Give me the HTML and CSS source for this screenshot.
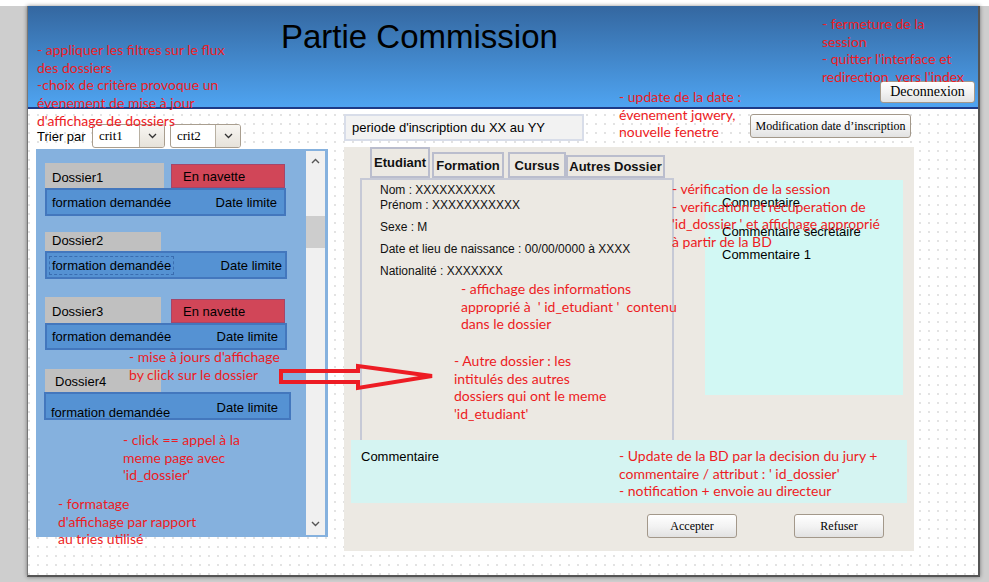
FILE: index.html
```html
<!DOCTYPE html>
<html lang="fr">
<head>
<meta charset="utf-8">
<title>Partie Commission</title>
<link rel="stylesheet" href="styles.css">
</head>
<body>
<div class="screen">
  <div class="canvas">
    <header class="header">
      <h1 class="title">Partie Commission</h1>
      <button class="btn btn-logout">Deconnexion</button>
    </header>

    <div class="main">
      <section class="left-col">
        <div class="toolbar">
          <span class="sort-label">Trier par</span>
          <div class="select sel1"><span class="sel-text">crit1</span><span class="sel-arrow"><svg width="9" height="6" viewBox="0 0 9 6"><path d="M1 1 L4.5 4.5 L8 1" fill="none" stroke="#333" stroke-width="1.3"/></svg></span></div>
          <div class="select sel2"><span class="sel-text">crit2</span><span class="sel-arrow"><svg width="9" height="6" viewBox="0 0 9 6"><path d="M1 1 L4.5 4.5 L8 1" fill="none" stroke="#333" stroke-width="1.3"/></svg></span></div>
        </div>

        <div class="list">
          <div class="list-items">
            <div class="dossier d1">
              <div class="d-top">
                <div class="d-name">Dossier1</div>
                <div class="d-badge">En navette</div>
              </div>
              <div class="d-bar"><span>formation demandée</span><span>Date limite</span></div>
            </div>

            <div class="dossier d2">
              <div class="d-top">
                <div class="d-name">Dossier2</div>
              </div>
              <div class="d-bar"><span class="focus">formation demandée</span><span>Date limite</span></div>
            </div>

            <div class="dossier d3">
              <div class="d-top">
                <div class="d-name">Dossier3</div>
                <div class="d-badge">En navette</div>
              </div>
              <div class="d-bar"><span>formation demandée</span><span>Date limite</span></div>
            </div>

            <div class="dossier d4">
              <div class="d-top">
                <div class="d-name">Dossier4</div>
              </div>
              <div class="d-bar"><span class="low">formation demandée</span><span class="high">Date limite</span></div>
            </div>
          </div>
          <div class="scrollbar">
            <span class="sb-up"><svg width="9" height="6" viewBox="0 0 9 6"><path d="M1 5 L4.5 1.5 L8 5" fill="none" stroke="#555" stroke-width="1.4"/></svg></span>
            <span class="sb-thumb"></span>
            <span class="sb-down"><svg width="9" height="6" viewBox="0 0 9 6"><path d="M1 1 L4.5 4.5 L8 1" fill="none" stroke="#555" stroke-width="1.4"/></svg></span>
          </div>
        </div>
      </section>

      <section class="right-col">
        <div class="top-row">
          <div class="periode">periode d'inscription du XX au YY</div>
          <button class="btn btn-modif">Modification date d’inscription</button>
        </div>

        <div class="panel">
          <div class="tabs">
            <div class="tab tab-etudiant">Etudiant</div>
            <div class="tab tab-formation">Formation</div>
            <div class="tab tab-cursus">Cursus</div>
            <div class="tab tab-autres">Autres Dossier</div>
          </div>
          <div class="content-row">
            <div class="info-box">
              <div class="info-pair">
                <div>Nom : XXXXXXXXXX</div>
                <div>Prénom : XXXXXXXXXXX</div>
              </div>
              <div class="info-line">Sexe : M</div>
              <div class="info-line">Date et lieu de naissance : 00/00/0000 à XXXX</div>
              <div class="info-line">Nationalité : XXXXXXX</div>
            </div>
            <div class="comments">
              <div class="c1">Commentaire</div>
              <div class="c2">Commentaire secrétaire</div>
              <div class="c3">Commentaire 1</div>
            </div>
          </div>
          <div class="comment-bottom">Commentaire</div>
          <div class="actions">
            <button class="btn btn-act">Accepter</button>
            <button class="btn btn-act btn-refuse">Refuser</button>
          </div>
        </div>
      </section>
    </div>

    <!-- annotations layered over the mockup -->
    <div class="note n-a">- appliquer les filtres sur le flux<br>des dossiers<br>-choix de critère provoque un<br>évenement de mise à jour<br>d'affichage de dossiers</div>
    <div class="note n-b">- fermeture de la<br>session<br>- quitter l'interface et<br>redirection&nbsp; vers l'index</div>
    <div class="note n-c">- update de la date :<br>évenement jqwery,<br>nouvelle fenetre</div>
    <div class="note n-d">- vérification de la session<br>- verification et récuperation de<br>'id_dossier ' et affichage approprié<br>à partir de la BD</div>
    <div class="note n-e">- affichage des informations<br>approprié à&nbsp; ' id_etudiant '&nbsp; contenu<br>dans le dossier</div>
    <div class="note n-f">- Autre dossier : les<br>intitulés des autres<br>dossiers qui ont le meme<br>'id_etudiant'</div>
    <div class="note n-g">- Update de la BD par la decision du jury +<br>commentaire / attribut : ' id_dossier'<br>- notification + envoie au directeur</div>
    <div class="note n-h">- mise à jours d'affichage<br>by click sur le dossier</div>
    <div class="note n-i">- click == appel à la<br>meme page avec<br>'id_dossier'</div>
    <div class="note n-j">- formatage<br>d'affichage par rapport<br>au tries utilisé</div>

    <svg class="arrow" width="160" height="32" viewBox="0 0 160 32">
      <polygon points="2,9 79,9 79,4 153,14 79,26 79,20 2,20" fill="none" stroke="#ed1c24" stroke-width="4" stroke-linejoin="miter"/>
    </svg>
  </div>
</div>
</body>
</html>
```

FILE: styles.css
```css
* { box-sizing: border-box; }
html, body { margin: 0; padding: 0; }
body {
  background: #fff;
  width: 989px;
  height: 582px;
  overflow: hidden;
  font-family: "Liberation Sans", Arial, sans-serif;
  color: #000;
}
.screen {
  margin-top: 6px;
  height: 576px;
  background: #cecece;
  padding-left: 27px;
}
.canvas {
  position: relative;
  width: 953px;
  height: 571px;
  border-left: 1px solid #777;
  border-right: 2px solid #555;
  border-bottom: 2px solid #555;
  background-color: #fff;
  background-image: radial-gradient(circle at 1px 1px, #e2e2e2 0.7px, transparent 1.2px);
  background-size: 9px 9px;
  box-shadow: 0 0 4px rgba(0, 0, 0, 0.45);
}

/* header */
.header {
  height: 103px;
  border-bottom: 2px solid #1d3a87;
  background: linear-gradient(#3467a0, #4fa4f1);
  display: flex;
  justify-content: space-between;
  padding: 12px 3px 4px 253px;
}
.title {
  margin: 0;
  font-weight: normal;
  font-size: 33px;
  line-height: 38px;
  color: #000;
  align-self: flex-start;
}

/* buttons */
.btn {
  font-family: "Liberation Serif", "Times New Roman", serif;
  font-size: 12px;
  color: #000;
  background: linear-gradient(#ffffff, #f3f3f3 50%, #e2e2e2);
  border: 1px solid #a3988a;
  border-radius: 3px;
  padding: 0;
  margin: 0;
  display: flex;
  align-items: center;
  justify-content: center;
}
.btn-logout {
  align-self: flex-end;
  width: 95px;
  height: 22px;
  font-size: 14px;
}
.btn-modif {
  width: 161px;
  height: 24px;
  margin-right: 3px;
}

/* main layout */
.main {
  display: flex;
  align-items: flex-start;
}
.left-col {
  margin-left: 8px;
  width: 292px;
}
.right-col {
  margin-left: 16px;
  width: 570px;
}

/* toolbar */
.toolbar {
  margin-top: 15px;
  height: 24px;
  display: flex;
  align-items: center;
  margin-bottom: 1px;
}
.sort-label {
  width: 56px;
  padding-left: 1px;
  font-size: 13px;
}
.select {
  height: 24px;
  display: flex;
  border: 1px solid #a99e8f;
  border-radius: 3px;
  background: #fff;
  font-family: "Liberation Serif", "Times New Roman", serif;
  font-size: 13px;
  overflow: hidden;
}
.sel1 { width: 73px; }
.sel2 { width: 71px; margin-left: 5px; }
.sel-text {
  flex: 1;
  padding-left: 6px;
  display: flex;
  align-items: center;
}
.sel-arrow {
  width: 25px;
  border-left: 1px solid #b8b0a2;
  background: linear-gradient(#f8f6f2, #e6e2da);
  display: flex;
  align-items: center;
  justify-content: center;
}

/* list */
.list {
  height: 388px;
  background: #85b1de;
  display: grid;
  grid-template-columns: 1fr 19px;
  padding-right: 3px;
}
.list-items {
  padding: 14px 0 0 9px;
  font-size: 13px;
}
.dossier { display: flex; flex-direction: column; }
.d-top { display: flex; align-items: flex-end; }
.d-name {
  background: #c0c0c0;
  width: 116px;
  padding-left: 7px;
}
.d-badge {
  margin-left: 10px;
  width: 114px;
  height: 24px;
  background: #d14658;
  border: 1px solid #a4466a;
  padding-left: 11px;
  line-height: 24px;
}
.d-bar {
  height: 28px;
  width: 242px;
  background: #5592d3;
  border: 2px solid #4377bd;
  display: flex;
  justify-content: space-between;
  align-items: center;
  padding: 0 6px 0 5px;
}
.d1 .d-name { width: 119px; height: 25px; padding-top: 7px; }
.d1 .d-badge { margin-left: 7px; }
.d1 .d-bar { width: 241px; padding-right: 7px; }
.d2 { margin-top: 16px; }
.d2 .d-name { height: 19px; padding-top: 1px; }
.d2 .d-bar { padding-right: 3px; }
.focus {
  outline: 1px dashed #3a6db0;
  outline-offset: 1px;
  padding: 0 1px;
  margin-left: -1px;
}
.d3 { margin-top: 18px; }
.d3 .d-name { height: 26px; padding-top: 7px; }
.d3 .d-badge { margin-left: 10px; }
.d3 .d-bar { height: 27px; padding-right: 7px; }
.d4 { margin-top: 19px; }
.d4 .d-name { height: 23px; padding-top: 5px; padding-left: 10px; }
.d4 .d-bar {
  width: 247px;
  margin-left: -1px;
  align-items: flex-start;
  padding: 0 11px 0 5px;
}
.d4 .low { margin-top: 11px; }
.d4 .high { margin-top: 6px; }

.scrollbar {
  margin: 2px 0;
  background: #f0f0f0;
  position: relative;
  display: flex;
  flex-direction: column;
  align-items: center;
}
.sb-up { margin-top: 7px; height: 8px; display: flex; }
.sb-thumb {
  margin-top: 50px;
  width: 19px;
  height: 32px;
  background: #cdcdcd;
}
.sb-down { margin-top: auto; margin-bottom: 6px; height: 8px; display: flex; }

/* right column */
.top-row {
  margin-top: 5px;
  display: flex;
  justify-content: space-between;
  align-items: flex-start;
}
.periode {
  width: 240px;
  height: 27px;
  background: #f2f2f2;
  border: 2px solid #d8dde9;
  padding-left: 6px;
  font-size: 13px;
  line-height: 23px;
}
.panel {
  margin-top: 6px;
  height: 404px;
  background: #ece9e3;
  font-size: 13px;
}
.tabs {
  display: flex;
  align-items: flex-end;
  padding-left: 26px;
  height: 31px;
}
.tab {
  border: 2px solid #babdcd;
  font-weight: bold;
  display: flex;
  align-items: center;
  justify-content: center;
  color: #111;
}
.tab-etudiant { width: 60px; height: 31px; }
.tab-formation { width: 72px; height: 26px; margin-left: 2px; }
.tab-cursus { width: 58px; height: 26px; margin-left: 4px; }
.tab-autres { width: 99px; height: 23px; }

.content-row {
  display: flex;
  align-items: flex-start;
}
.info-box {
  margin-left: 16px;
  width: 314px;
  height: 264px;
  border: 2px solid #c6c9d6;
  padding: 3px 0 0 18px;
  font-size: 12px;
  line-height: 15px;
  color: #111;
}
.info-line { margin-top: 7px; }
.comments {
  margin-left: 31px;
  margin-top: 2px;
  width: 198px;
  height: 215px;
  background: #d2f8f4;
  padding: 15px 0 0 17px;
  line-height: 15px;
}
.c2 { margin-top: 14px; }
.c3 { margin-top: 8px; }
.comment-bottom {
  margin-top: -2px;
  margin-left: 7px;
  width: 556px;
  height: 63px;
  background: #d5f4f2;
  padding: 9px 0 0 10px;
  line-height: 15px;
  position: relative;
}
.actions {
  display: flex;
  margin-top: 11px;
  padding-left: 303px;
}
.btn-act { width: 90px; height: 24px; }
.btn-refuse { margin-left: 57px; }

/* annotations */
.note {
  position: absolute;
  font-family: Lato, "Open Sans", sans-serif;
  font-size: 14px;
  line-height: 17.7px;
  color: #ed1c24;
  white-space: nowrap;
}
.n-a { left: 9px; top: 35px; }
.n-b { left: 794px; top: 9px; }
.n-c { left: 591px; top: 82px; }
.n-d { left: 644px; top: 174px; }
.n-e { left: 433px; top: 274px; }
.n-f { left: 426px; top: 346px; }
.n-g { left: 591px; top: 441px; }
.n-h { left: 101px; top: 342px; }
.n-i { left: 95px; top: 425px; }
.n-j { left: 30px; top: 489px; }

.arrow {
  position: absolute;
  left: 251px;
  top: 356px;
}
```
